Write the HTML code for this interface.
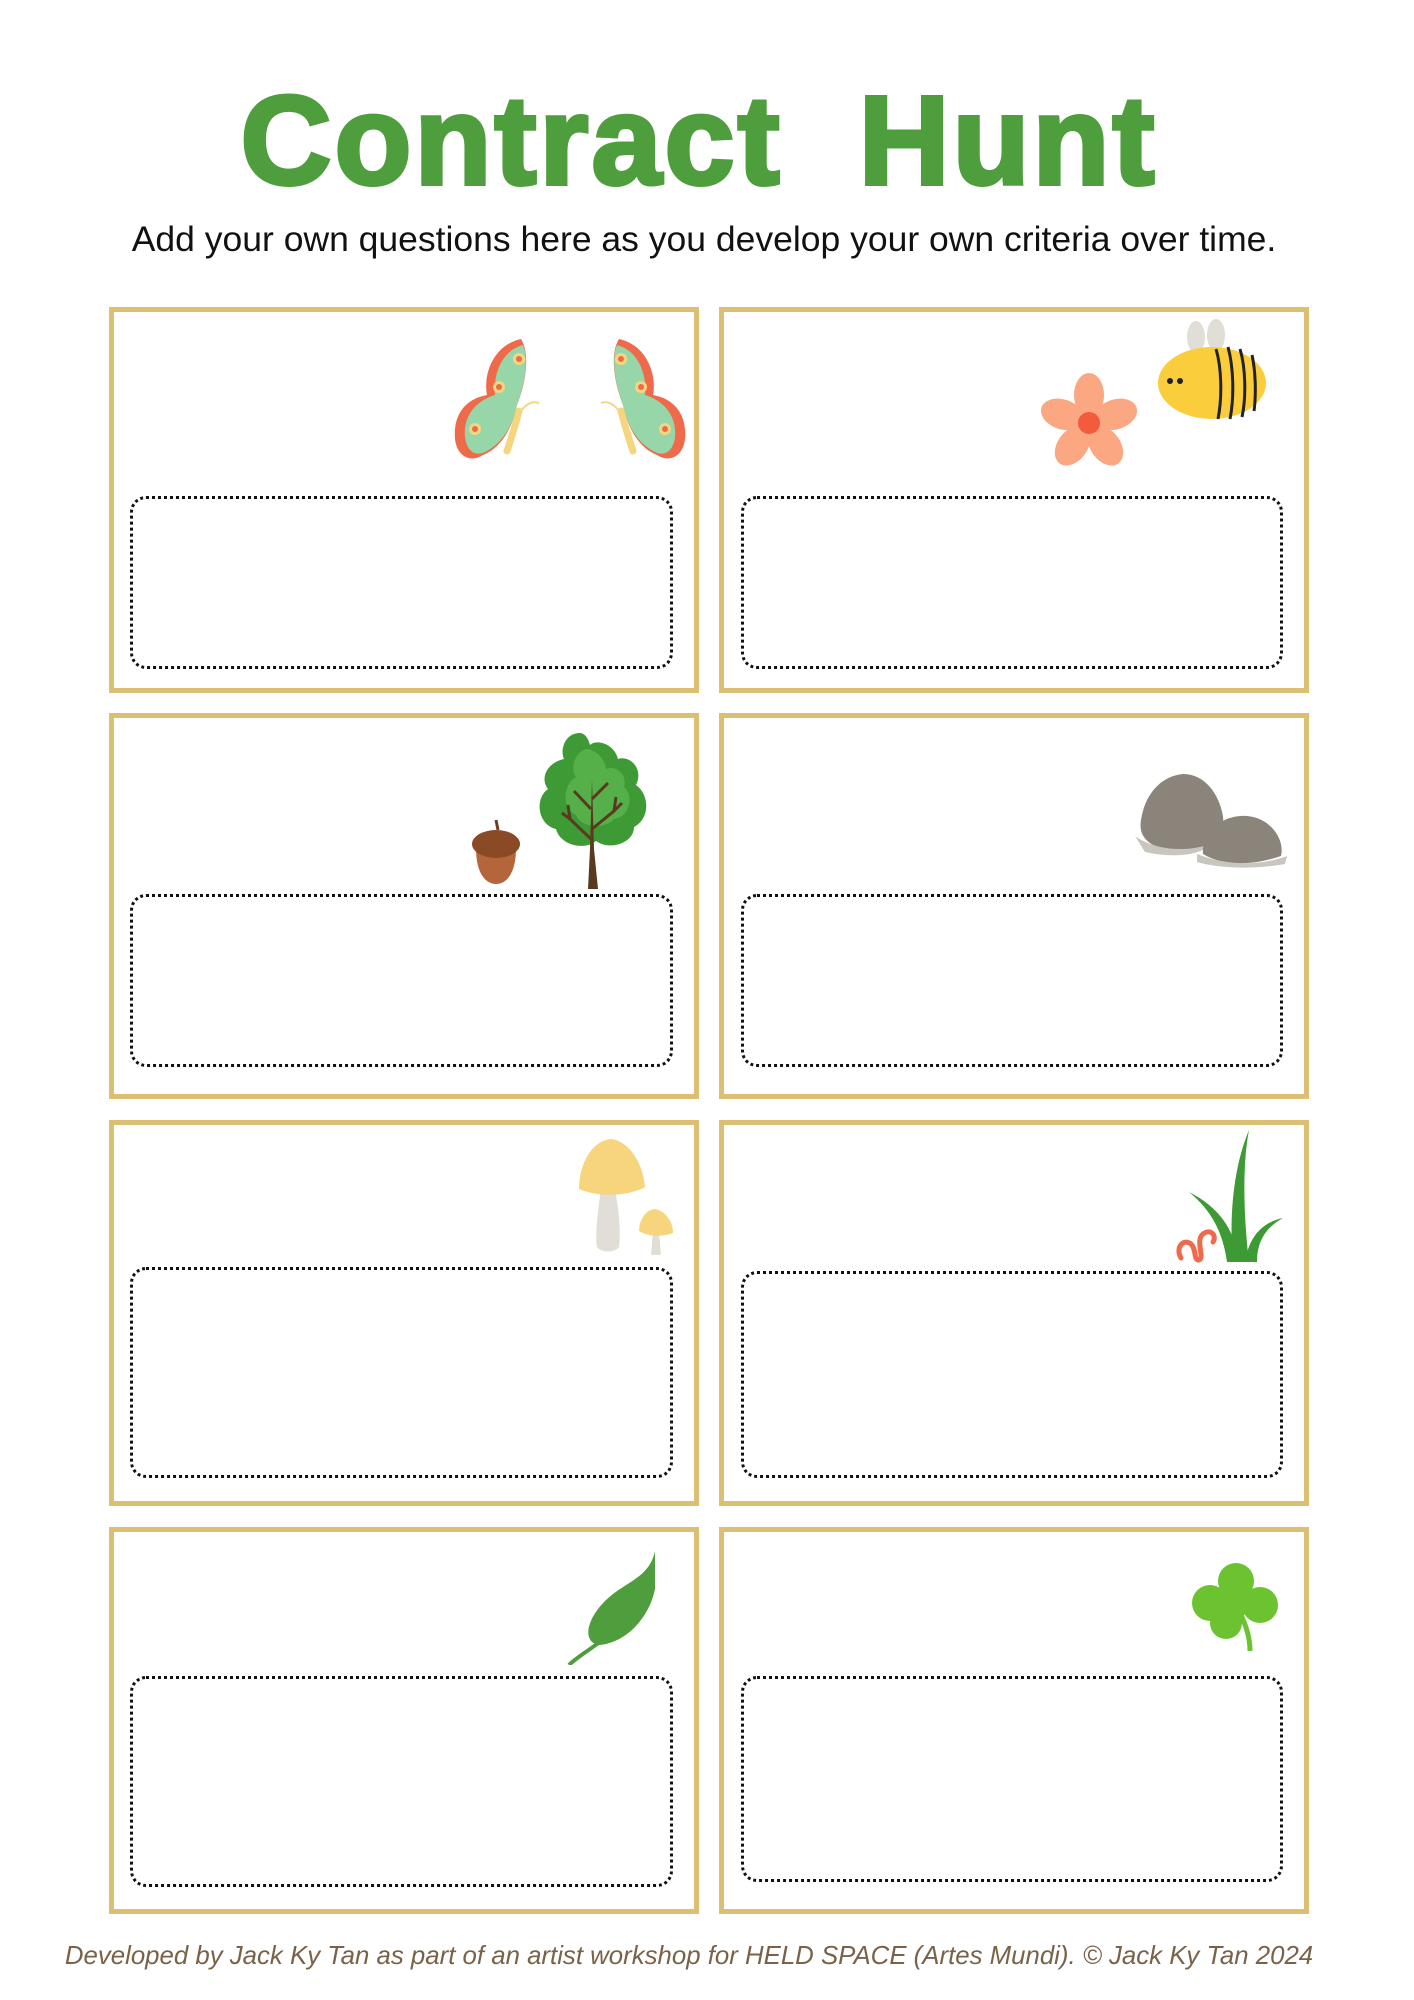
<!DOCTYPE html>
<html><head><meta charset="utf-8">
<style>
html,body{margin:0;padding:0;background:#fff;}
body{width:1414px;height:2000px;position:relative;overflow:hidden;font-family:"Liberation Sans",sans-serif;}
.t{position:absolute;left:0;width:1414px;text-align:center;}
.card{position:absolute;box-sizing:border-box;border:5px solid #dcbf72;background:#fff;}
.box{position:absolute;box-sizing:border-box;border:3px dotted #111;border-radius:16px;}
svg{position:absolute;}
</style></head><body>
<div class="t" style="top:76px;font-size:126px;font-weight:bold;color:#4f9e3e;-webkit-text-stroke:4px #4f9e3e;line-height:130px;left:-8px;letter-spacing:3px;">Contract&nbsp; Hunt</div>
<div class="t" style="top:218px;font-size:35.5px;color:#111;line-height:42px;left:-3px;">Add your own questions here as you develop your own criteria over time.</div>

<div class="card" style="left:109px;top:307px;width:590px;height:386px"></div>
<div class="card" style="left:719px;top:307px;width:590px;height:386px"></div>
<div class="card" style="left:109px;top:713px;width:590px;height:386px"></div>
<div class="card" style="left:719px;top:713px;width:590px;height:386px"></div>
<div class="card" style="left:109px;top:1120px;width:590px;height:386px"></div>
<div class="card" style="left:719px;top:1120px;width:590px;height:386px"></div>
<div class="card" style="left:109px;top:1527px;width:590px;height:387px"></div>
<div class="card" style="left:719px;top:1527px;width:590px;height:387px"></div>

<div class="box" style="left:130px;top:496px;width:543px;height:173px"></div>
<div class="box" style="left:741px;top:496px;width:542px;height:173px"></div>
<div class="box" style="left:130px;top:894px;width:543px;height:173px"></div>
<div class="box" style="left:741px;top:894px;width:542px;height:173px"></div>
<div class="box" style="left:130px;top:1267px;width:543px;height:211px"></div>
<div class="box" style="left:741px;top:1271px;width:542px;height:207px"></div>
<div class="box" style="left:130px;top:1676px;width:543px;height:211px"></div>
<div class="box" style="left:741px;top:1676px;width:542px;height:206px"></div>

<svg style="left:453px;top:335px" width="234" height="130" viewBox="0 0 234 130">
 <g>
  <path d="M68 4 C40 10 30 40 34 60 C12 64 0 80 2 104 C4 122 18 128 30 120 C50 112 60 90 64 70 C72 50 78 20 68 4Z" fill="#ee6a4a"/>
  <path d="M70 10 C48 16 40 40 42 60 C22 66 10 82 12 102 C14 118 24 122 34 116 C52 106 60 88 64 70 C72 48 76 24 70 10Z" fill="#97d6a8"/>
  <circle cx="66" cy="24" r="6" fill="#f5d680"/><circle cx="66" cy="24" r="3" fill="#ee6a4a"/>
  <circle cx="46" cy="52" r="6" fill="#f5d680"/><circle cx="46" cy="52" r="3" fill="#ee6a4a"/>
  <circle cx="22" cy="94" r="6" fill="#f5d680"/><circle cx="22" cy="94" r="3" fill="#ee6a4a"/>
  <path d="M66 76 C62 92 58 104 54 116" stroke="#f5d680" stroke-width="7" stroke-linecap="round" fill="none"/>
  <path d="M68 76 C74 68 80 66 86 68" stroke="#f5d680" stroke-width="2" fill="none"/>
 </g>
 <g transform="translate(234,0) scale(-1,1)">
  <path d="M68 4 C40 10 30 40 34 60 C12 64 0 80 2 104 C4 122 18 128 30 120 C50 112 60 90 64 70 C72 50 78 20 68 4Z" fill="#ee6a4a"/>
  <path d="M70 10 C48 16 40 40 42 60 C22 66 10 82 12 102 C14 118 24 122 34 116 C52 106 60 88 64 70 C72 48 76 24 70 10Z" fill="#97d6a8"/>
  <circle cx="66" cy="24" r="6" fill="#f5d680"/><circle cx="66" cy="24" r="3" fill="#ee6a4a"/>
  <circle cx="46" cy="52" r="6" fill="#f5d680"/><circle cx="46" cy="52" r="3" fill="#ee6a4a"/>
  <circle cx="22" cy="94" r="6" fill="#f5d680"/><circle cx="22" cy="94" r="3" fill="#ee6a4a"/>
  <path d="M66 76 C62 92 58 104 54 116" stroke="#f5d680" stroke-width="7" stroke-linecap="round" fill="none"/>
  <path d="M68 76 C74 68 80 66 86 68" stroke="#f5d680" stroke-width="2" fill="none"/>
 </g>
</svg>

<svg style="left:1041px;top:373px" width="96" height="98" viewBox="0 0 96 98">
 <g fill="#fba882" transform="translate(48,50)">
  <ellipse cx="0" cy="-28" rx="15" ry="22"/>
  <ellipse cx="0" cy="-28" rx="15" ry="22" transform="rotate(72)"/>
  <ellipse cx="0" cy="-28" rx="15" ry="22" transform="rotate(144)"/>
  <ellipse cx="0" cy="-28" rx="15" ry="22" transform="rotate(216)"/>
  <ellipse cx="0" cy="-28" rx="15" ry="22" transform="rotate(288)"/>
 </g>
 <circle cx="48" cy="50" r="11" fill="#f45a3c"/>
</svg>

<svg style="left:1156px;top:319px" width="112" height="102" viewBox="0 0 112 102">
 <ellipse cx="40" cy="18" rx="9" ry="16" fill="#e0ded6"/>
 <ellipse cx="60" cy="16" rx="9" ry="16" fill="#e0ded6"/>
 <ellipse cx="56" cy="64" rx="54" ry="36" fill="#f9cd3c"/>
 <g stroke="#222" stroke-width="3" fill="none">
  <path d="M60 30 C66 50 66 80 62 100"/><path d="M72 28 C78 50 78 80 74 100"/><path d="M84 30 C90 50 90 80 86 98"/><path d="M96 36 C100 54 100 78 98 92"/>
 </g>
 <circle cx="14" cy="62" r="3" fill="#222"/><circle cx="24" cy="62" r="3" fill="#222"/>
</svg>

<svg style="left:470px;top:818px" width="52" height="68" viewBox="0 0 52 68">
 <path d="M26 2 L28 12" stroke="#6b3f24" stroke-width="3"/>
 <path d="M6 30 C6 56 16 66 26 66 C36 66 46 56 46 30Z" fill="#b5653a"/>
 <ellipse cx="26" cy="26" rx="24" ry="14" fill="#8a4a26"/>
</svg>

<svg style="left:530px;top:729px" width="120" height="160" viewBox="0 0 120 160">
 <path d="M50 4 C34 4 30 22 34 30 C16 34 10 50 18 60 C4 70 8 96 26 100 C30 116 54 122 66 112 C80 122 104 114 104 98 C120 90 120 66 106 56 C114 40 100 26 88 30 C84 14 66 10 60 16 C58 8 54 4 50 4Z" fill="#3e9a35"/>
 <path d="M56 20 C44 24 40 40 46 48 C32 56 32 80 46 86 C52 100 76 100 84 90 C100 88 104 66 94 58 C98 44 84 36 76 40 C74 26 62 20 56 20Z" fill="#56b04a"/>
 <path d="M58 160 L60 120 L62 50 L64 120 L68 160Z" fill="#5a3a1e"/>
 <g stroke="#5a3a1e" stroke-width="3" fill="none">
  <path d="M61 110 L40 90 L32 84"/><path d="M62 100 L84 82 L92 74"/><path d="M61 80 L44 62"/><path d="M62 70 L78 54"/><path d="M40 90 L38 76"/><path d="M84 82 L86 68"/>
 </g>
</svg>

<svg style="left:1131px;top:770px" width="156" height="98" viewBox="0 0 156 98">
 <path d="M10 50 C14 24 30 6 52 4 C74 4 88 24 92 46 C94 66 80 78 56 80 C30 82 6 74 10 50Z" fill="#8a847a"/>
 <path d="M4 66 C20 78 50 84 80 74 C70 86 40 88 14 82Z" fill="#c9c6c0"/>
 <path d="M72 84 C70 64 90 44 116 46 C140 48 154 70 150 86 C120 96 92 96 72 84Z" fill="#8a847a"/>
 <path d="M66 84 C96 96 130 96 156 86 L154 94 C120 100 86 98 66 92Z" fill="#c9c6c0"/>
</svg>

<svg style="left:577px;top:1137px" width="100" height="118" viewBox="0 0 100 118">
 <path d="M24 52 C20 80 18 100 20 110 C24 116 38 116 42 110 C44 96 42 74 38 52Z" fill="#e0ded6"/>
 <path d="M2 52 C2 28 14 4 34 2 C52 4 66 26 68 50 C50 60 20 60 2 52Z" fill="#f6d57d"/>
 <path d="M76 94 L74 118 L84 118 L82 94Z" fill="#e0ded6"/>
 <path d="M62 94 C62 82 70 72 78 72 C88 74 96 84 96 96 C84 100 72 100 62 94Z" fill="#f6d57d"/>
</svg>

<svg style="left:1173px;top:1128px" width="110" height="136" viewBox="0 0 110 136">
 <path d="M60 134 C56 90 60 40 76 2 C68 44 72 100 76 134Z" fill="#3e9a35"/>
 <path d="M54 134 C50 104 38 82 16 64 C44 78 62 100 66 134Z" fill="#3e9a35"/>
 <path d="M72 134 C76 108 90 94 110 90 C92 100 84 114 84 134Z" fill="#3e9a35"/>
 <path d="M8 130 C2 120 10 110 18 116 C24 122 20 132 26 132 C32 130 22 112 30 106 C38 100 44 108 40 114" stroke="#ee6a4a" stroke-width="5" fill="none" stroke-linecap="round"/>
</svg>

<svg style="left:565px;top:1549px" width="95" height="116" viewBox="0 0 95 116">
 <path d="M90 2 C84 30 60 32 40 52 C20 72 18 94 34 96 C60 94 84 70 90 40Z" fill="#4f9e3e"/>
 <path d="M36 92 C26 100 12 108 4 116" stroke="#4f9e3e" stroke-width="4" fill="none"/>
</svg>

<svg style="left:1190px;top:1561px" width="92" height="90" viewBox="0 0 92 90">
 <g fill="#6cc330">
  <circle cx="46" cy="20" r="18"/><circle cx="20" cy="42" r="18"/><circle cx="70" cy="44" r="18"/><circle cx="36" cy="62" r="16"/><circle cx="46" cy="40" r="16"/>
 </g>
 <path d="M50 52 C56 64 60 76 60 90" stroke="#6cc330" stroke-width="5" fill="none"/>
</svg>

<div class="t" style="top:1940px;font-size:25.8px;font-style:italic;color:#7a6248;line-height:32px;left:-18px;">Developed by Jack Ky Tan as part of an artist workshop for HELD SPACE (Artes Mundi). © Jack Ky Tan 2024</div>
</body></html>
